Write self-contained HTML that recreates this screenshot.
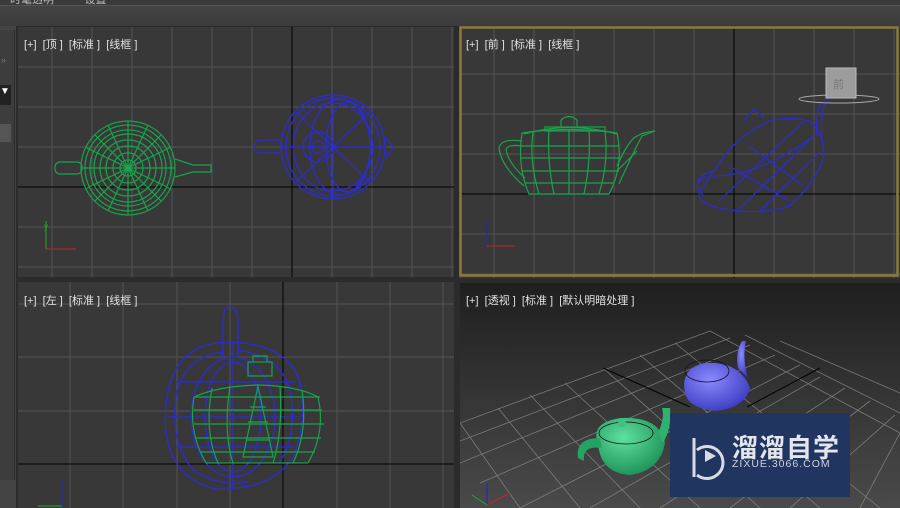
<!DOCTYPE html><html><head><meta charset="utf-8"><style>
body{margin:0;width:900px;height:508px;overflow:hidden;background:#2b2b2b;font-family:"Liberation Sans","Noto Sans CJK SC",sans-serif;position:relative}
.a{position:absolute}
.lbl{position:absolute;color:#e0e0e0;font-size:11px;white-space:pre;font-family:"Liberation Sans","Noto Sans CJK SC",sans-serif}
</style></head><body>
<div class="a" style="left:0;top:0;width:900px;height:5px;background:#3a3a3a"></div>
<div class="lbl" style="left:10px;top:-9px;color:#bbb">时髦透明          设置</div>
<div class="a" style="left:0;top:5px;width:900px;height:1px;background:#555"></div>
<div class="a" style="left:0;top:6px;width:900px;height:20px;background:linear-gradient(#444,#3b3b3b)"></div>
<div class="a" style="left:0;top:26px;width:16px;height:482px;background:#444"></div>
<div class="a" style="left:0;top:30px;width:14px;height:450px;border-right:1px solid #2a2a2a;background:#3d3d3d"></div>
<div class="a" style="left:0;top:85px;width:11px;height:20px;background:#222"></div>
<div class="lbl" style="left:0;top:86px;color:#fff;font-size:10px">▼</div>
<div class="a" style="left:0;top:124px;width:11px;height:18px;background:#555"></div>
<div class="lbl" style="left:1px;top:55px;color:#778;font-size:9px">»</div>

<!-- TL -->
<svg class="a" style="left:18px;top:27px" width="436" height="250">
<rect width="436" height="250" fill="#383838"/>
<g stroke="#535353" stroke-width="1">
<path d="M34 0V250M74 0V250M114 0V250M154 0V250M194 0V250M234 0V250M314 0V250M354 0V250M394 0V250M434 0V250M0 40H436M0 80H436M0 120H436M0 200H436M0 240H436"/></g>
<path d="M274 0V250M0 160H436" stroke="#000"/>
<g fill="none" stroke="#19a34a" stroke-width="1.2">
<circle cx="110" cy="141" r="47"/><circle cx="110" cy="141" r="43"/><circle cx="110" cy="141" r="38"/><circle cx="110" cy="141" r="34"/><circle cx="110" cy="141" r="28"/><circle cx="110" cy="141" r="22"/><circle cx="110" cy="141" r="15"/><circle cx="110" cy="141" r="8"/>
<path d="M63 141H157M110 94V188M77 108L143 174M77 174L143 108M67 120L153 162M67 162L153 120M90 98L130 184M130 98L90 184"/>
<rect x="37" y="135" width="27" height="12" rx="5"/><path d="M157 132L175 138H193L193 145H175L157 150"/>
</g>
<g fill="none" stroke="#2b2bd8" stroke-width="1.2">
<ellipse cx="315" cy="120" rx="52" ry="52"/><ellipse cx="315" cy="120" rx="47" ry="49"/><ellipse cx="315" cy="120" rx="40" ry="44"/><ellipse cx="330" cy="120" rx="22" ry="45"/><ellipse cx="322" cy="120" rx="30" ry="48"/><circle cx="300" cy="120" r="15"/><circle cx="300" cy="120" r="6"/>
<path d="M263 120H367M315 68V172M278 85L352 155M278 155L352 85"/><rect x="237" y="113" width="27" height="13" rx="5"/><path d="M367 110L375 120L367 132"/>
</g>
<path d="M28 222V194" stroke="#2a2" /><path d="M28 222H58" stroke="#c22"/><text x="26" y="202" fill="#2a2" font-size="8">y</text>
</svg>
<div class="lbl" style="left:24px;top:36px">[+]  [顶 ]  [标准 ]  [线框 ]</div>

<!-- TR -->
<svg class="a" style="left:459px;top:26px" width="441" height="252">
<rect width="441" height="252" fill="#383838"/>
<g stroke="#535353"><path d="M35 0V252M75 0V252M115 0V252M155 0V252M195 0V252M235 0V252M315 0V252M355 0V252M395 0V252M435 0V252M0 48H441M0 88H441M0 128H441M0 208H441M0 248H441"/></g>
<path d="M275 0V252M0 168H441" stroke="#000"/>
<rect x="1.5" y="1.5" width="437" height="248" fill="none" stroke="#8c7a3a" stroke-width="2.5"/>
<g fill="none" stroke="#19a34a" stroke-width="1.2">
<path d="M70 168Q58 140 63 107Q110 100 158 107Q165 140 150 168Z"/>
<path d="M80 168Q70 135 74 106M95 168Q88 135 90 104M110 168V103M125 168Q132 135 130 104M140 168Q150 135 146 106"/>
<path d="M62 120H160M61 132H162M62 145H160M66 157H155"/>
<path d="M65 108Q110 95 158 108"/><rect x="86" y="101" width="60" height="4"/>
<path d="M102 100V94Q110 87 118 94V100"/>
<path d="M63 115Q42 112 40 122Q42 140 65 160M63 120Q48 118 47 124Q50 138 66 152"/>
<path d="M158 140Q168 118 175 112Q183 106 196 105L183 110Q175 125 160 158M158 145L178 125"/>
</g>
<g fill="none" stroke="#2b2bd8" stroke-width="1.2">
<path d="M245 160Q230 175 260 182Q300 190 330 180Q355 160 365 130Q365 105 350 95Q330 90 310 95Q280 110 265 130Q255 145 245 160Z"/>
<path d="M260 175L345 95M280 183L355 110M300 186L362 125M270 140L330 175M290 120L345 160M240 165Q233 150 255 145M245 170Q230 158 248 150M255 150Q300 150 355 110"/>
<path d="M365 125Q360 100 365 80Q368 72 372 70L374 68M358 110Q356 90 362 75"/>
<path d="M285 95L295 83L305 92"/>
</g>
<ellipse cx="380" cy="73" rx="40" ry="4" fill="none" stroke="#aaa"/>
<rect x="367" y="42" width="30" height="30" fill="#9c9c9c" stroke="#bbb"/><text x="374" y="62" font-size="11" fill="#777" font-family="Noto Sans CJK SC">前</text>
<path d="M28 220V196" stroke="#22c"/><path d="M28 220H56" stroke="#c22"/>
</svg>
<div class="lbl" style="left:466px;top:36px">[+]  [前 ]  [标准 ]  [线框 ]</div>

<!-- BL -->
<svg class="a" style="left:18px;top:282px" width="436" height="226">
<rect width="436" height="226" fill="#383838"/>
<g stroke="#535353"><path d="M52 0V226M105 0V226M159 0V226M212 0V226M319 0V226M372 0V226M425 0V226M0 22H436M0 75H436M0 129H436"/></g>
<path d="M265 0V226M0 182H436" stroke="#000"/>
<g fill="none" stroke="#2b2bd8" stroke-width="1.3">
<path d="M212 60Q160 60 150 110Q140 160 165 190Q190 212 215 206Q255 205 275 175Q290 140 282 100Q270 62 212 60Z"/>
<path d="M205 70Q165 75 158 115Q152 160 175 188Q200 205 230 200M220 68Q265 75 272 110Q280 150 262 180"/>
<ellipse cx="215" cy="135" rx="42" ry="60"/><ellipse cx="215" cy="135" rx="28" ry="55"/>
<path d="M205 75V40Q205 25 212 25Q220 25 220 40V75"/><path d="M150 135H280M215 60V207M158 100H278M158 165H275"/>
</g>
<g fill="none" stroke="#19a34a" stroke-width="1.2">
<path d="M188 181Q170 150 176 115Q200 104 240 103Q280 104 300 115Q308 150 290 181Z"/>
<path d="M176 128H304M176 142H306M178 156H303M182 170H297M200 181Q186 150 194 106M215 181Q205 150 212 104M255 181Q265 150 262 104M275 181Q290 150 284 108"/>
<path d="M225 175L240 104L255 175Z M230 140H250M232 125H248M228 158H252"/><rect x="230" y="80" width="24" height="14"/><path d="M235 80V74H249V80M176 115H302"/>
</g>
<path d="M44 226V198" stroke="#22c"/><path d="M44 224H20" stroke="#2a2"/>
</svg>
<div class="lbl" style="left:24px;top:292px">[+]  [左 ]  [标准 ]  [线框 ]</div>

<!-- BR -->
<svg class="a" style="left:460px;top:283px" width="440" height="225">
<defs><linearGradient id="g" x1="0" y1="0" x2="0" y2="1"><stop offset="0" stop-color="#1f1f1f"/><stop offset="1" stop-color="#4a4a4a"/></linearGradient>
<radialGradient id="gt" cx=".4" cy=".35" r=".7"><stop offset="0" stop-color="#5fe0a0"/><stop offset="1" stop-color="#1a8f55"/></radialGradient>
<radialGradient id="bt" cx=".4" cy=".35" r=".7"><stop offset="0" stop-color="#8a8aff"/><stop offset="1" stop-color="#3a3ac0"/></radialGradient></defs>
<rect width="440" height="225" fill="url(#g)"/>
<g stroke="#8a8a8a" stroke-width=".8" fill="none" opacity=".8">
<path d="M0 140L250 48M0 158L270 55M0 180L290 62M20 200L315 72M60 225L340 82M130 225L360 94M200 225L385 105M270 225L410 118M330 225L435 132M400 225L440 150"/>
<path d="M250 48L440 150M215 60L420 225M180 72L360 225M143 85L300 225M105 100L240 225M70 112L180 225M38 125L120 225M0 140L60 225M285 52L440 130M320 58L440 110"/>
</g>
<path d="M143 85L230 124M287 124L360 85" stroke="#000"/>
<path d="M225 110Q220 85 245 80Q280 78 290 105Q285 125 255 128Q228 125 225 110Z" fill="url(#bt)"/>
<path d="M278 85Q275 70 282 58L286 58Q282 75 288 95Z" fill="url(#bt)"/>
<ellipse cx="247" cy="88" rx="22" ry="11" fill="none" stroke="#112" stroke-width=".8"/>
<path d="M138 160Q130 140 160 135Q200 133 205 160Q200 188 170 192Q140 190 138 160Z" fill="url(#gt)"/>
<path d="M140 155Q115 155 118 175L124 178Q122 162 142 165Z" fill="#23a465"/>
<path d="M198 150Q205 135 202 125L210 125Q212 145 203 160Z" fill="#2cb36f"/>
<ellipse cx="166" cy="150" rx="27" ry="11" fill="none" stroke="#111" stroke-width=".8"/><circle cx="162" cy="140" r="4" fill="#40c080"/>
<path d="M27 222V200" stroke="#22c"/><path d="M27 222L50 210" stroke="#c22"/><path d="M27 222L12 212" stroke="#2a2"/>
<rect x="210" y="130" width="180" height="84" fill="#203560"/>
<path d="M237 167A16 16 0 1 1 237 192" fill="none" stroke="#d8dce6" stroke-width="3"/>
<path d="M234 155V194" stroke="#d8dce6" stroke-width="3"/>
<path d="M245 167L256 173L245 179Z" fill="#d8dce6"/>
</svg>
<div class="lbl" style="left:466px;top:292px">[+]  [透视 ]  [标准 ]  [默认明暗处理 ]</div>
<div class="lbl" style="left:732px;top:428px;font-size:26px;font-weight:bold;color:#e4e6ee;letter-spacing:1px">溜溜自学</div>
<div class="lbl" style="left:732px;top:458px;font-size:10.5px;color:#cdd2dc;letter-spacing:1px">ZIXUE.3066.COM</div>
</body></html>
